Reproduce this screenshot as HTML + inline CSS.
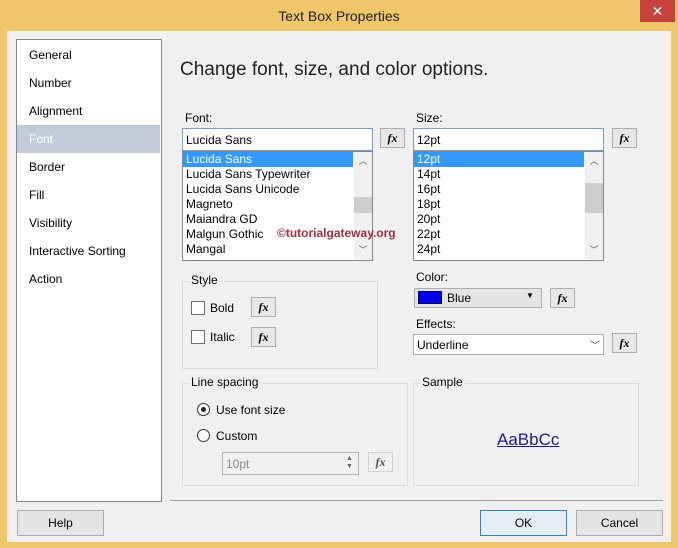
<!DOCTYPE html><html><head><style>
*{box-sizing:border-box;margin:0;padding:0}
body{width:678px;height:548px;background:#f0c66a;font-family:"Liberation Sans",sans-serif;font-size:12px;color:#000;position:relative;overflow:hidden}
.a{position:absolute}
.t{font-size:14px;left:0;width:678px;text-align:center;top:8px;color:#222}
.close{left:640px;top:0;width:35px;height:22px;background:#c7423a;color:#fff;text-align:center;font-size:14px;line-height:22px}
.main{left:7px;top:31px;width:664px;height:511px;background:#f0f0f0}
.box{background:#fff;border:1px solid #a0a0a0}
.fx{width:25px;height:20px;border:1px solid #adadad;background:#e8e8e8;font:italic bold 12px "Liberation Serif",serif;text-align:center;line-height:18px}
.grp{border:1px solid #dcdcdc}
.lbl{background:#f0f0f0;padding:0 2px}
.btn{border:1px solid #adadad;background:#e5e5e5;text-align:center;line-height:24px;font-size:12px}
.row{height:15px;line-height:15px;padding-left:3px;font-size:12px}
.sb{width:18px;background:#f0f0f0;font-size:9px;color:#555;text-align:center}
</style></head><body>
<div class="a t">Text Box Properties</div>
<div class="a close">✕</div>
<div class="a main"></div>
<div class="a box" style="left:16px;top:39px;width:146px;height:463px;border-color:#828790"></div>
<div class="a" style="left:17px;top:125px;width:143px;height:28px;background:#c2ccd8"></div>
<div class="a" style="left:29px;top:41px;line-height:28px;font-size:12px">General<br>Number<br>Alignment<br><span style="color:#fff">Font</span><br>Border<br>Fill<br>Visibility<br>Interactive Sorting<br>Action</div>
<div class="a" style="left:180px;top:59px;font-size:19px;color:#222">Change font, size, and color options.</div>
<div class="a" style="left:185px;top:111px">Font:</div>
<div class="a" style="left:416px;top:111px">Size:</div>
<div class="a box" style="left:182px;top:128px;width:191px;height:23px;border-color:#7a9cc8;padding:4px 3px">Lucida Sans</div>
<div class="a box" style="left:413px;top:128px;width:191px;height:23px;border-color:#7a9cc8;padding:4px 3px">12pt</div>
<div class="a fx" style="left:380px;top:128px">fx</div>
<div class="a fx" style="left:612px;top:128px">fx</div>
<div class="a box" style="left:182px;top:151px;width:191px;height:110px;border-color:#828790"></div>
<div class="a" style="left:183px;top:152px;width:170px">
<div class="row" style="background:#3399ff;color:#fff">Lucida Sans</div><div class="row">Lucida Sans Typewriter</div><div class="row">Lucida Sans Unicode</div><div class="row">Magneto</div><div class="row">Maiandra GD</div><div class="row">Malgun Gothic</div><div class="row">Mangal</div></div>
<div class="a sb" style="left:354px;top:152px;height:107px"><div style="margin-top:2px">︿</div><div style="background:#cdcdcd;height:16px;margin-top:30px"></div><div style="margin-top:30px">﹀</div></div>
<div class="a box" style="left:413px;top:151px;width:191px;height:110px;border-color:#828790"></div>
<div class="a" style="left:414px;top:152px;width:170px">
<div class="row" style="background:#3399ff;color:#fff">12pt</div><div class="row">14pt</div><div class="row">16pt</div><div class="row">18pt</div><div class="row">20pt</div><div class="row">22pt</div><div class="row">24pt</div></div>
<div class="a sb" style="left:585px;top:152px;height:107px"><div style="margin-top:2px">︿</div><div style="background:#cdcdcd;height:30px;margin-top:16px"></div><div style="margin-top:30px">﹀</div></div>
<div class="a" style="left:277px;top:226px;font-weight:bold;color:#a03040;font-size:12px">©tutorialgateway.org</div>
<div class="a grp" style="left:182px;top:281px;width:196px;height:88px"></div>
<div class="a lbl" style="left:189px;top:273px">Style</div>
<div class="a box" style="left:191px;top:301px;width:14px;height:14px;border-color:#707070"></div>
<div class="a" style="left:210px;top:301px">Bold</div>
<div class="a fx" style="left:251px;top:297px">fx</div>
<div class="a box" style="left:191px;top:330px;width:14px;height:14px;border-color:#707070"></div>
<div class="a" style="left:210px;top:330px">Italic</div>
<div class="a fx" style="left:251px;top:327px">fx</div>
<div class="a" style="left:416px;top:270px">Color:</div>
<div class="a" style="left:414px;top:288px;width:128px;height:20px;border:1px solid #adadad;background:#e5e5e5"></div>
<div class="a" style="left:418px;top:291px;width:24px;height:13px;background:#0000ee;border:1px solid #000060"></div>
<div class="a" style="left:447px;top:291px">Blue</div>
<div class="a" style="left:526px;top:291px;font-size:8px">▼</div>
<div class="a fx" style="left:550px;top:288px">fx</div>
<div class="a" style="left:416px;top:317px">Effects:</div>
<div class="a box" style="left:413px;top:334px;width:191px;height:21px;border-color:#abadb3;padding:3px 3px">Underline</div>
<div class="a" style="left:590px;top:337px;font-size:10px;color:#444">﹀</div>
<div class="a fx" style="left:612px;top:333px">fx</div>
<div class="a grp" style="left:182px;top:383px;width:226px;height:103px"></div>
<div class="a lbl" style="left:189px;top:375px">Line spacing</div>
<div class="a" style="left:197px;top:403px;width:13px;height:13px;border:1px solid #333;border-radius:50%;background:#fff"></div>
<div class="a" style="left:201px;top:407px;width:5px;height:5px;border-radius:50%;background:#222"></div>
<div class="a" style="left:216px;top:403px">Use font size</div>
<div class="a" style="left:197px;top:429px;width:13px;height:13px;border:1px solid #333;border-radius:50%;background:#fff"></div>
<div class="a" style="left:216px;top:429px">Custom</div>
<div class="a" style="left:222px;top:452px;width:137px;height:23px;border:1px solid #b5b5b5;padding:4px 3px;color:#888">10pt</div>
<div class="a" style="left:346px;top:455px;font-size:7px;color:#666;line-height:8px">▲<br>▼</div>
<div class="a fx" style="left:368px;top:452px;border-color:#d0d0d0;background:#f0f0f0;color:#555">fx</div>
<div class="a grp" style="left:413px;top:383px;width:226px;height:103px"></div>
<div class="a lbl" style="left:420px;top:375px">Sample</div>
<div class="a" style="left:497px;top:430px;font-size:17px;color:#1a1a9a;text-decoration:underline">AaBbCc</div>
<div class="a" style="left:170px;top:500px;width:493px;height:1px;background:#a0a0a0"></div>
<div class="a btn" style="left:17px;top:510px;width:87px;height:26px">Help</div>
<div class="a btn" style="left:480px;top:510px;width:87px;height:26px;border-color:#3c7fb1;background:#e5eef7">OK</div>
<div class="a btn" style="left:576px;top:510px;width:87px;height:26px">Cancel</div>
</body></html>
